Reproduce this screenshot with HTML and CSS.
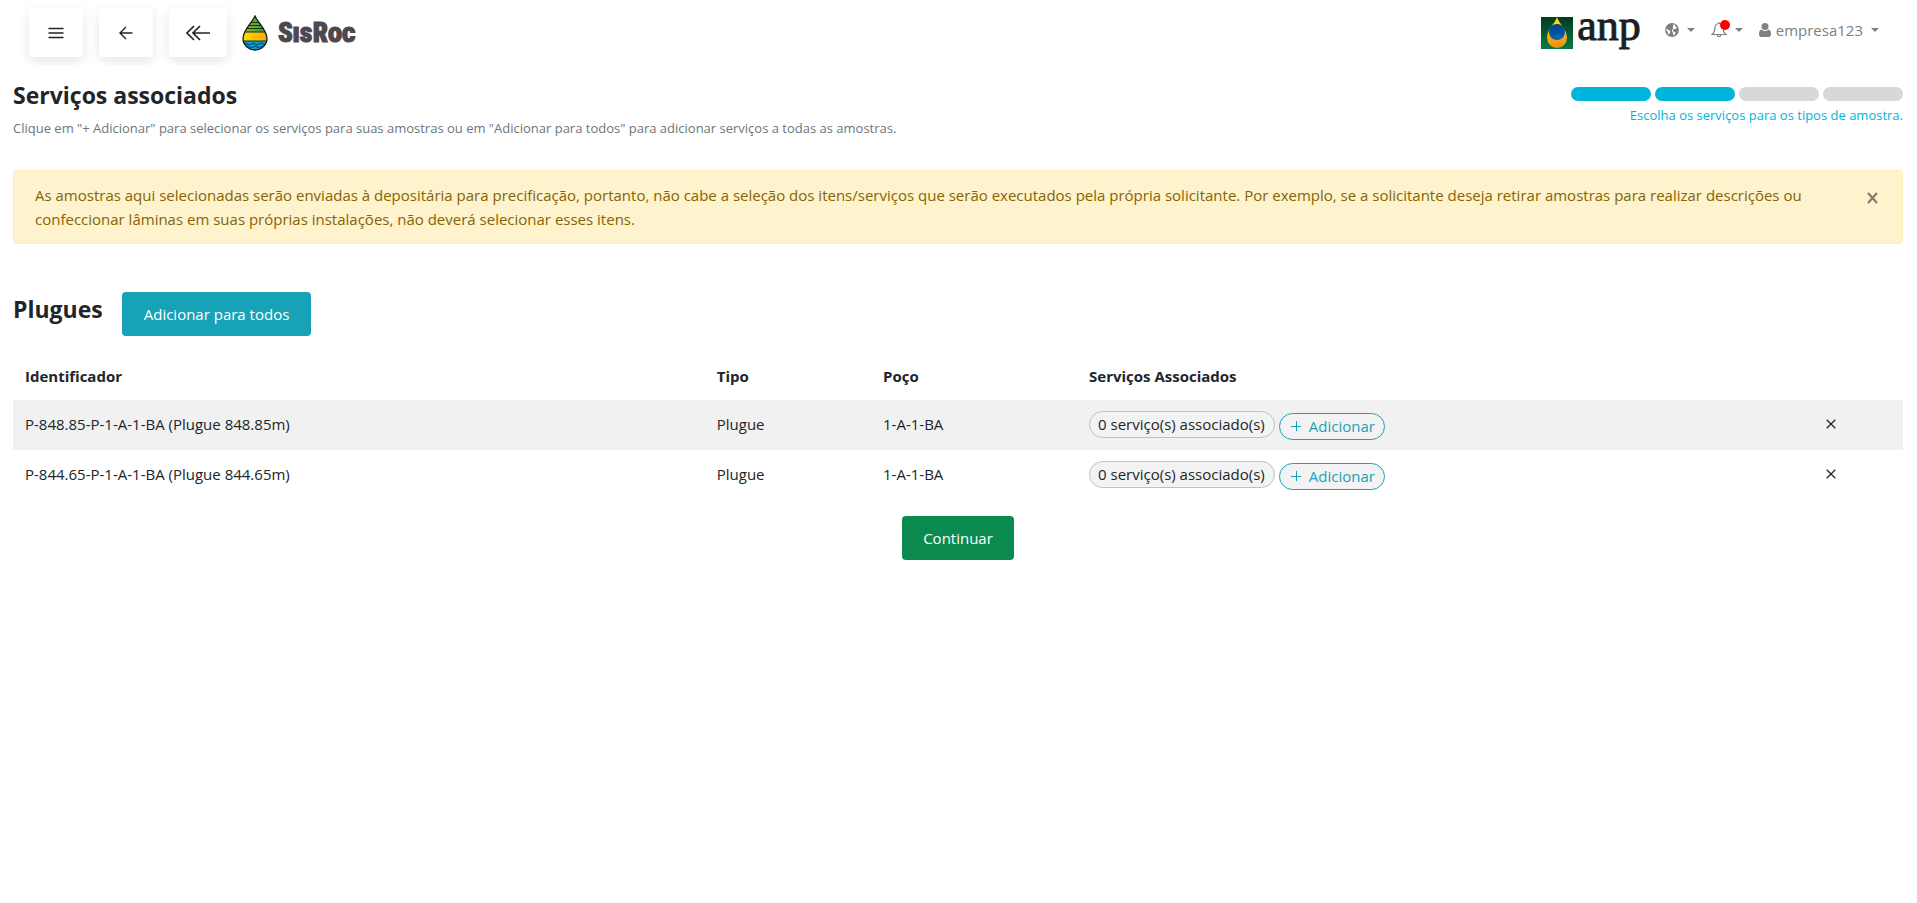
FILE: index.html
```html
<!DOCTYPE html>
<html lang="pt-BR">
<head>
<meta charset="utf-8">
<title>SisRoc - Serviços associados</title>
<link rel="stylesheet" href="styles.css">
</head>
<body>
<header class="topbar">
  <nav class="nav-left">
    <button class="nav-btn" type="button" aria-label="Menu">
      <svg width="16" height="12" viewBox="0 0 16 12" fill="none" stroke="currentColor" stroke-width="1.3"><path d="M0.500 1.500H15.500M0.500 6H15.500M0.500 10.500H15.500"/></svg>
    </button>
    <button class="nav-btn" type="button" aria-label="Voltar">
      <svg width="14" height="14" viewBox="0 0 14 14" fill="none" stroke="currentColor" stroke-width="1.4"><path d="M13.500 7H1.500M7 1L1 7l6 6"/></svg>
    </button>
    <button class="nav-btn nav-btn-wide" type="button" aria-label="Voltar ao início">
      <svg width="24" height="16" viewBox="0 0 24 16" fill="none" stroke="currentColor" stroke-width="1.7"><path d="M24 8H7.500M14 1L7 8l7 7M8 1L1 8l7 7"/></svg>
    </button>
    <a class="brand" href="#">
      <svg width="26" height="36" viewBox="0 0 26 36">
        <defs>
          <clipPath id="drop"><path d="M13 1C10 8 1 15 1 23.500a12 11.500 0 0 0 24 0C25 15 16 8 13 1z"/></clipPath>
          <linearGradient id="green"><stop offset="0" stop-color="#9dbb1f"/><stop offset="1" stop-color="#2f9440"/></linearGradient>
          <linearGradient id="gold"><stop offset="0" stop-color="#ffdd00"/><stop offset="1" stop-color="#fba40a"/></linearGradient>
        </defs>
        <g clip-path="url(#drop)">
          <path fill="url(#green)" d="M0 0h26v17H0z"/>
          <path fill="url(#gold)" d="M0 17h26v9H0z"/>
          <path fill="#0a9bd6" d="M0 26h26v10H0z"/>
          <path stroke="#17391b" d="M0 7.500h26M0 10.500h26M0 13.500h26M0 17h26M0 26h26"/>
          <path fill="none" stroke="#0b3b56" stroke-width=".9" d="M1 29q2-2 4 0t4 0 4 0 4 0 4 0 4 0M3 32q2-2 4 0t4 0 4 0 4 0 4 0"/>
        </g>
        <path fill="none" stroke="#10191c" stroke-width="1.300" d="M13 1C10 8 1 15 1 23.500a12 11.500 0 0 0 24 0C25 15 16 8 13 1z"/>
      </svg>
      <span class="brand-name">SisRoc</span>
    </a>
  </nav>
  <nav class="nav-right">
    <a class="anp" href="#">
      <svg width="32" height="32" viewBox="0 0 32 32">
        <defs>
          <linearGradient id="box" x2="0" y2="1"><stop offset="0" stop-color="#033b20"/><stop offset="1" stop-color="#087a45"/></linearGradient>
          <linearGradient id="flame" x2="0" y2="1"><stop offset="0" stop-color="#ffe600"/><stop offset="1" stop-color="#f08c16"/></linearGradient>
          <linearGradient id="globe" x2="0" y2="1"><stop offset="0" stop-color="#003f87"/><stop offset="1" stop-color="#0865b5"/></linearGradient>
        </defs>
        <path fill="url(#box)" d="M0 0h32v32H0z"/>
        <path fill="url(#flame)" d="M16 0C14 7 6 12 6 20.500a10 10.500 0 0 0 20 0C26 12 18 7 16 0z"/>
        <circle cx="16" cy="15" r="8" fill="url(#globe)"/>
      </svg>
      <span class="anp-name">anp</span>
    </a>
    <button class="menu" type="button" aria-label="Idioma">
      <svg width="14" height="14" viewBox="0 0 14 14"><circle cx="7" cy="7" r="6.900" fill="#808080"/><path fill="#fff" d="M8.200 1.300l2.300 1-.3 1.300 1.500.6-.6 1.600-1.900.2-1.200 1 .4 1.700 1.700.3.300 1.400-1.200 1.800-.9-.3-.4-2.300-1-1.400.3-1.400 1.200-1.600-.8-1 .9-1.100zM1.500 5.500l2.200 1.600 1.700 1.200-.5 1.500-1 1.700-.9-.6-.2-1.800-1.300-1.500z"/></svg>
      <span class="caret"></span>
    </button>
    <button class="menu menu-bell" type="button" aria-label="Notificações">
      <span class="bell">
        <svg width="16" height="16" viewBox="0 0 16 16" fill="none" stroke="#808080" stroke-width="1.200"><path d="M8 1.500C5 1.500 3.800 3.800 3.800 6.500c0 3.500-1.300 5-2.800 6h14c-1.500-1-2.800-2.500-2.800-6C12.200 3.800 11 1.500 8 1.500zM6.300 13a1.700 1.700 0 0 0 3.400 0M8 0v1.500"/></svg>
        <span class="bell-dot"></span>
      </span>
      <span class="caret"></span>
    </button>
    <button class="menu menu-user" type="button">
      <svg width="12" height="14" viewBox="0 0 12 14" fill="#808080"><circle cx="6" cy="3.600" r="3.500"/><path d="M2.500 6.500C.7 7 0 8.800 0 11c0 1.800.8 3 2.300 3h7.400C11.200 14 12 12.800 12 11c0-2.200-.7-4-2.500-4.500a4.700 4.700 0 0 1-7 0z"/></svg>
      <span class="user-name">empresa123</span>
      <span class="caret"></span>
    </button>
  </nav>
</header>
<main class="page">
  <section class="intro">
    <div>
      <h1 class="title">Serviços associados</h1>
      <p class="subtitle">Clique em "+ Adicionar" para selecionar os serviços para suas amostras ou em "Adicionar para todos" para adicionar serviços a todas as amostras.</p>
    </div>
    <div class="steps">
      <div class="step-bars">
        <span class="step step-done"></span><span class="step step-done"></span><span class="step"></span><span class="step"></span>
      </div>
      <p class="step-label">Escolha os serviços para os tipos de amostra.</p>
    </div>
  </section>
  <div class="alert" role="alert">
    <p class="alert-text">As amostras aqui selecionadas serão enviadas à depositária para precificação, portanto, não cabe a seleção dos itens/serviços que serão executados pela própria solicitante. Por exemplo, se a solicitante deseja retirar amostras para realizar descrições ou confeccionar lâminas em suas próprias instalações, não deverá selecionar esses itens.</p>
    <button class="alert-close" type="button" aria-label="Fechar"><svg width="11" height="12" viewBox="0 0 11 12" stroke="#827b68" stroke-width="2.200"><path d="M1 1l9 10M10 1l-9 10"/></svg></button>
  </div>
  <div class="group-head">
    <h2 class="title">Plugues</h2>
    <button class="btn btn-info" type="button">Adicionar para todos</button>
  </div>
  <table class="samples">
    <thead>
      <tr><th class="col-id">Identificador</th><th class="col-type">Tipo</th><th class="col-well">Poço</th><th>Serviços Associados</th><th class="col-remove"></th></tr>
    </thead>
    <tbody>
      <tr>
        <td>P-848.85-P-1-A-1-BA (Plugue 848.85m)</td><td>Plugue</td><td>1-A-1-BA</td>
        <td><div class="services"><span class="pill">0 serviço(s) associado(s)</span><button class="pill pill-add" type="button"><svg width="10" height="10" viewBox="0 0 10 10" stroke="currentColor"><path d="M0 5.500h10M5.500 0v10"/></svg>Adicionar</button></div></td>
        <td class="col-remove"><button class="remove" type="button" aria-label="Remover"><svg width="10" height="10" viewBox="0 0 10 10" stroke="currentColor" stroke-width="1.300"><path d="M.7.7l8.600 8.600M9.300.7L.7 9.300"/></svg></button></td>
      </tr>
      <tr>
        <td>P-844.65-P-1-A-1-BA (Plugue 844.65m)</td><td>Plugue</td><td>1-A-1-BA</td>
        <td><div class="services"><span class="pill">0 serviço(s) associado(s)</span><button class="pill pill-add" type="button"><svg width="10" height="10" viewBox="0 0 10 10" stroke="currentColor"><path d="M0 5.500h10M5.500 0v10"/></svg>Adicionar</button></div></td>
        <td class="col-remove"><button class="remove" type="button" aria-label="Remover"><svg width="10" height="10" viewBox="0 0 10 10" stroke="currentColor" stroke-width="1.300"><path d="M.7.7l8.600 8.600M9.300.7L.7 9.300"/></svg></button></td>
      </tr>
    </tbody>
  </table>
  <div class="actions"><button class="btn btn-success" type="button">Continuar</button></div>
</main>
</body>
</html>
```
FILE: styles.css
```css
* { box-sizing: border-box; }

body {
  margin: 0;
  background: #fff;
  color: #212529;
  font: 15px/24px "Open Sans", "Noto Sans", sans-serif;
}

h1, h2, p { margin: 0; }

button {
  margin: 0;
  padding: 0;
  border: 0;
  background: none;
  color: inherit;
  font: inherit;
  cursor: pointer;
}

a { color: inherit; text-decoration: none; }
svg { display: block; flex: none; }

.topbar {
  display: flex;
  justify-content: space-between;
  height: 65px;
  padding: 8px 35px 0 29px;
  overflow: hidden;
}

.nav-left { display: flex; align-items: flex-start; gap: 16px; }

.nav-btn {
  display: flex;
  align-items: center;
  justify-content: center;
  width: 54px;
  height: 49px;
  border-radius: 4px;
  background: #fff;
  box-shadow: 0 4px 12px rgba(0, 0, 0, .1);
}

.nav-btn-wide { width: 58px; }

.brand {
  display: flex;
  align-items: center;
  gap: 10px;
  height: 36px;
  margin-top: 7px;
  margin-left: -1px;
}

.brand-name {
  color: #4d4750;
  font: 900 27px/36px "Roboto Condensed", "Open Sans Condensed", Roboto, sans-serif;
  font-variant: small-caps;
  -webkit-text-stroke: 1px #4d4750;
}

.nav-right { display: flex; align-items: flex-start; }
.anp { display: flex; gap: 4px; margin: 9px 24px 0 0; }

.anp-name {
  margin-top: -16px;
  color: #1c1e22;
  font: 44px/50px "Liberation Serif", serif;
  -webkit-text-stroke: 1px #1c1e22;
}

.menu {
  display: flex;
  align-items: center;
  gap: 8px;
  height: 24px;
  margin: 10px 16px 0 0;
  color: #808080;
}

.menu-user { gap: 5px; margin-right: 3px; }
.user-name { margin-right: 3px; }

.caret {
  border: 4px solid transparent;
  border-top-color: #808080;
  border-bottom: 0;
}

.bell { position: relative; }

.bell-dot {
  position: absolute;
  top: -2px;
  right: -3px;
  width: 10px;
  height: 10px;
  border-radius: 50%;
  background: #f00;
}

.page { padding: 16px 14px 0 13px; }

.intro { display: flex; justify-content: space-between; }

.title { font-size: 23px; line-height: 29px; font-weight: 700; }
.subtitle { margin-top: 8px; color: #6c757d; font-size: 13px; line-height: 20px; }

.steps { padding-top: 6px; }
.step-bars { display: flex; justify-content: flex-end; gap: 4px; }
.step { width: 80px; height: 14px; border-radius: 7px; background: #d8d8d8; }
.step-done { background: #00b4dc; }
.step-label { margin-top: 4px; color: #00b4dc; font-size: 13px; line-height: 20px; text-align: right; }

.alert {
  display: flex;
  justify-content: space-between;
  gap: 48px;
  margin-top: 32px;
  padding: 12px 24px 12px 21px;
  border: 1px solid #ffeeba;
  border-radius: 4px;
  background: #fff3cd;
  color: #856404;
}

.alert-close { align-self: flex-start; padding: 9px 0; }

.group-head { display: flex; gap: 19px; margin-top: 48px; }
.group-head .title { margin-top: 3px; }

.btn { height: 44px; padding: 0 22px; border-radius: 4px; color: #fff; }
.btn-info { background: #17a2b8; }
.btn-success { padding: 0 21px; background: #0b8a50; }

.samples {
  width: 100%;
  margin-top: 18px;
  border-collapse: collapse;
  table-layout: fixed;
}

.samples th, .samples td { padding: 0 12px 2px; text-align: left; vertical-align: middle; }
.samples th { height: 46px; }
.samples td { height: 50px; }
.samples tbody tr:nth-child(odd) { background: #f1f1f1; }
.col-id { width: 36.6%; }
.col-type { width: 8.8%; }
.col-well { width: 10.9%; }
.samples .col-remove { width: 7.6%; text-align: center; }
.remove { padding: 8px; }

.services { display: flex; align-items: flex-start; gap: 4px; height: 27px; }

.pill {
  height: 27px;
  padding: 0 9px 0 8px;
  border: 1px solid #c0c0c0;
  border-radius: 14px;
  background: #f3f3f3;
  white-space: nowrap;
}

.pill-add {
  display: flex;
  align-items: center;
  gap: 8px;
  margin-top: 2px;
  padding: 0 9px 0 11px;
  border-color: #17a2b8;
  color: #17a2b8;
}

.actions { display: flex; justify-content: center; margin-top: 16px; }
```
